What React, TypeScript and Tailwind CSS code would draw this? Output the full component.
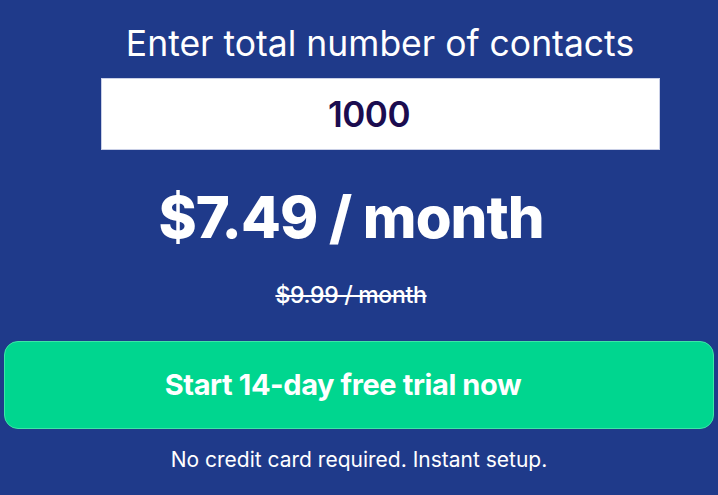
import React from "react";

export default function App() {
  return (
    <div className="w-[718px] h-[495px] bg-[#1f3a8a] flex flex-col items-center overflow-hidden" style={{ fontFamily: "Inter, 'Liberation Sans', sans-serif" }}>
      <div className="w-full pl-[42px] mt-[22px] h-[44px] flex items-center justify-center text-white text-[35.5px] leading-none">
        Enter total number of contacts
      </div>
      <div className="mt-[12px] w-[559px] h-[72px] bg-white border border-[#c9cfe6] flex items-center justify-center pr-[23px] text-[#1b0c4f] text-[35px] font-semibold tracking-[-0.5px] ml-[43px]">
        1000
      </div>
      <div className="w-full pr-[16px] mt-[38px] flex justify-center text-white text-[58px] font-extrabold leading-none tracking-[-1px]">
        $7.49 / month
      </div>
      <div className="w-full pr-[16px] mt-[38px] flex justify-center text-white text-[23px] font-medium leading-none line-through tracking-[-0.3px]">
        $9.99 / month
      </div>
      <div className="mt-[34px] w-[710px] h-[88px] rounded-[14px] bg-[#00d68f] border border-[#3ce6a6] flex items-center justify-center pr-[32px] text-white text-[29px] font-bold tracking-[-0.4px]">
        Start 14-day free trial now
      </div>
      <div className="mt-[20px] text-white text-[21px] leading-none">
        No credit card required. Instant setup.
      </div>
    </div>
  );
}
